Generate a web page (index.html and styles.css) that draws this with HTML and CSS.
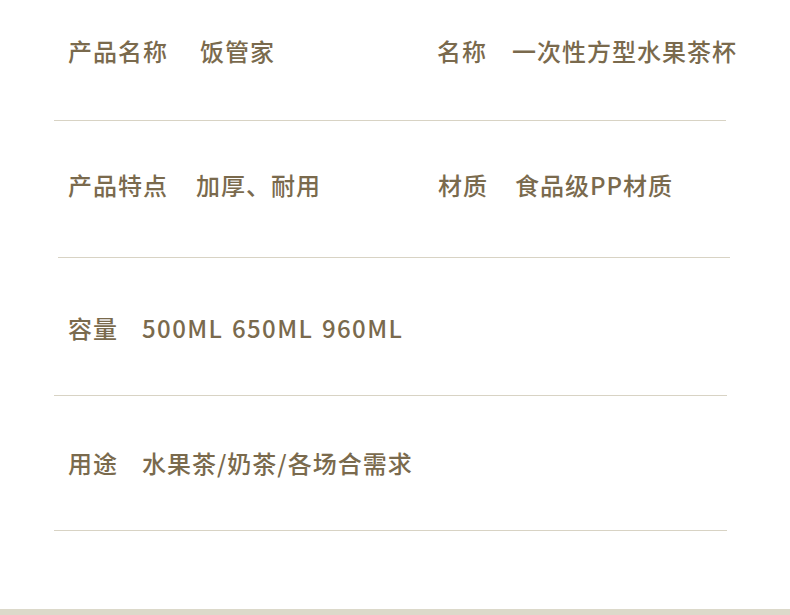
FILE: index.html
```html
<!DOCTYPE html>
<html lang="zh-CN">
<head>
<meta charset="utf-8">
<title>产品参数</title>
<link rel="stylesheet" href="styles.css">
</head>
<body>
<main class="sheet">
  <section class="row row-1">
    <div class="cell cell-left"><span class="label">产品名称</span><span class="value gap-32">饭管家</span></div>
    <div class="cell cell-right"><span class="label">名称</span><span class="value gap-25">一次性方型水果茶杯</span></div>
  </section>
  <section class="row row-2">
    <div class="cell cell-left"><span class="label">产品特点</span><span class="value gap-28">加厚、耐用</span></div>
    <div class="cell cell-right"><span class="label">材质</span><span class="value gap-27">食品级PP材质</span></div>
  </section>
  <section class="row row-3">
    <div class="cell cell-left"><span class="label">容量</span><span class="value gap-24 latin">500ML&nbsp; 650ML&nbsp; 960ML</span></div>
    <div class="cell cell-right"></div>
  </section>
  <section class="row row-4">
    <div class="cell cell-left"><span class="label">用途</span><span class="value gap-24">水果茶/奶茶/各场合需求</span></div>
    <div class="cell cell-right"></div>
  </section>
  <div class="band"></div>
</main>
</body>
</html>
```
FILE: styles.css
```css
html, body {
  margin: 0;
  padding: 0;
  background: #ffffff;
}
body {
  width: 790px;
  height: 615px;
  overflow: hidden;
  font-family: "Noto Sans CJK SC", "Noto Sans", sans-serif;
  font-weight: 500;
  color: #7a6a4d;
}
.sheet {
  display: flex;
  flex-direction: column;
}
.row {
  display: grid;
  grid-template-columns: 383px 1fr;
  margin-left: 54px;
  width: 672px;
  border-bottom: 1px solid #d8d3c4;
  font-size: 24px;
  line-height: 30px;
  letter-spacing: 1px;
}
.cell {
  display: flex;
  align-items: center;
  white-space: nowrap;
}
.cell-left {
  padding-left: 14px;
}
.row-1 { padding: 36px 0 54px; }
.row-2 {
  margin-left: 58px;
  grid-template-columns: 380px 1fr;
  padding: 49px 0 57px;
}
.row-2 .cell-left { padding-left: 10px; }
.row-3 {
  width: 673px;
  padding: 55px 0 52px;
}
.row-4 {
  width: 673px;
  padding: 52px 0 52px;
}
.gap-24 { margin-left: 24px; }
.gap-25 { margin-left: 25px; }
.gap-27 { margin-left: 27px; }
.gap-28 { margin-left: 28px; }
.gap-32 { margin-left: 32px; }
.latin { letter-spacing: 1.4px; word-spacing: -2.5px; }
.band {
  margin-top: 78px;
  height: 6px;
  background: #dcd9ca;
}
```
